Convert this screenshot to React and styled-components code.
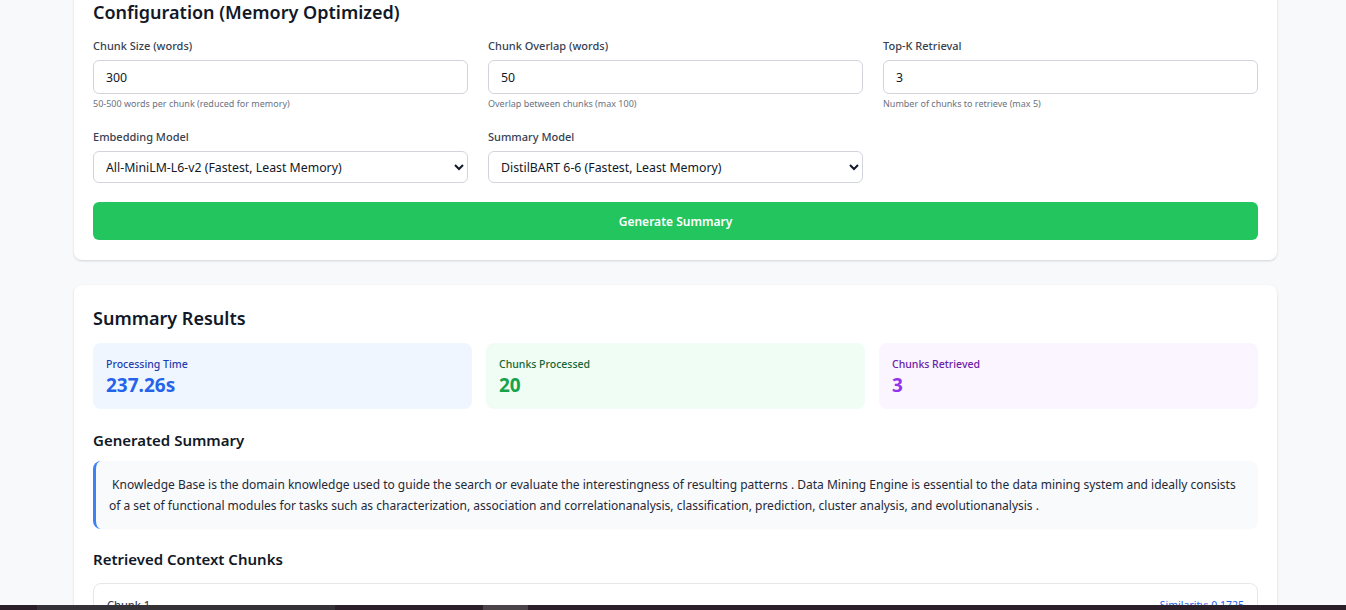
import styled, { createGlobalStyle } from 'styled-components';

const Global = createGlobalStyle`
  html, body {
    margin: 0;
    padding: 0;
    background: #f8f9fb;
    overflow: hidden;
  }
  body {
    font-family: "Noto Sans", "Open Sans", sans-serif;
    color: #111827;
  }
  * { box-sizing: border-box; }
`;

const fields = [
  { label: 'Chunk Size (words)', value: '300', help: '50-500 words per chunk (reduced for memory)' },
  { label: 'Chunk Overlap (words)', value: '50', help: 'Overlap between chunks (max 100)' },
  { label: 'Top-K Retrieval', value: '3', help: 'Number of chunks to retrieve (max 5)' },
];

const stats = [
  { label: 'Processing Time', value: '237.26s', tone: 'blue' },
  { label: 'Chunks Processed', value: '20', tone: 'green' },
  { label: 'Chunks Retrieved', value: '3', tone: 'purple' },
];

const tones = {
  blue: { bg: '#eff6ff', label: '#1e40af', value: '#2563eb' },
  green: { bg: '#f0fdf4', label: '#166534', value: '#16a34a' },
  purple: { bg: '#faf5ff', label: '#6b21a8', value: '#9333ea' },
};

function App() {
  return (
    <Page>
      <Global />
      <Card>
        <Title>Configuration (Memory Optimized)</Title>
        <Grid>
          {fields.map((f) => (
            <Field key={f.label}>
              <Label>{f.label}</Label>
              <Input defaultValue={f.value} />
              <Help>{f.help}</Help>
            </Field>
          ))}
          <Field>
            <Label>Embedding Model</Label>
            <Select defaultValue="a">
              <option value="a">All-MiniLM-L6-v2 (Fastest, Least Memory)</option>
            </Select>
          </Field>
          <Field>
            <Label>Summary Model</Label>
            <Select defaultValue="b">
              <option value="b">DistilBART 6-6 (Fastest, Least Memory)</option>
            </Select>
          </Field>
        </Grid>
        <GenerateButton>Generate Summary</GenerateButton>
      </Card>

      <Card>
        <ResultsTitle>Summary Results</ResultsTitle>
        <Stats>
          {stats.map((s) => (
            <Stat key={s.label} $tone={s.tone}>
              <StatLabel $tone={s.tone}>{s.label}</StatLabel>
              <StatValue $tone={s.tone}>{s.value}</StatValue>
            </Stat>
          ))}
        </Stats>
        <SubTitle>Generated Summary</SubTitle>
        <SummaryBox>
          &nbsp;Knowledge Base is the domain knowledge used to guide the search or evaluate the interestingness of resulting patterns . Data Mining Engine is essential to the data mining system and ideally consists of a set of functional modules for tasks such as characterization, association and correlationanalysis, classification, prediction, cluster analysis, and evolutionanalysis .
        </SummaryBox>
        <SubTitle $top="19px" $bottom="13px">Retrieved Context Chunks</SubTitle>
        <ChunkCard>
          <ChunkHead>
            <ChunkName>Chunk 1</ChunkName>
            <Similarity>Similarity: 0.1725</Similarity>
          </ChunkHead>
        </ChunkCard>
      </Card>

      <Taskbar>
        <TaskSegment $w="37px" $bg="#2b2029" />
        <TaskSegment $w="298px" $bg="#343236" />
        <TaskSegment $w="148px" $bg="#2b2029" />
        <TaskSegment $w="45px" $bg="#4a4448" />
        <TaskSegment $w="auto" $bg="#2b2029" $grow />
      </Taskbar>
    </Page>
  );
}

const Page = styled.div`
  display: flex;
  flex-direction: column;
  gap: 25px;
  padding: 0 69px 0 74px;
  margin-top: -22px;
`;

const Card = styled.section`
  background: #ffffff;
  border-radius: 8px;
  box-shadow: 0 1px 3px rgba(0, 0, 0, 0.1), 0 1px 2px rgba(0, 0, 0, 0.06);
  padding: 20px 19px 20px 19px;
  display: flex;
  flex-direction: column;
`;

const Title = styled.h2`
  margin: 0 0 12px;
  font-size: 18px;
  line-height: 28px;
  font-weight: 600;
  color: #111827;
`;

const Grid = styled.div`
  display: grid;
  grid-template-columns: repeat(3, 1fr);
  column-gap: 20px;
  row-gap: 18px;
`;

const Field = styled.div`
  display: flex;
  flex-direction: column;
`;

const Label = styled.label`
  font-size: 11px;
  line-height: 16px;
  font-weight: 500;
  color: #374151;
  margin-bottom: 6px;
`;

const Input = styled.input`
  height: 34px;
  border: 1px solid #d1d5db;
  border-radius: 6px;
  padding: 0 12px;
  font-family: inherit;
  font-size: 12.3px;
  color: #111827;
  background: #fff;
  outline: none;
`;

const Help = styled.p`
  margin: 3px 0 0;
  font-size: 9px;
  line-height: 14px;
  color: #6b7280;
`;

const Select = styled.select`
  height: 32px;
  border: 1px solid #d1d5db;
  border-radius: 6px;
  padding: 0 8px;
  font-family: inherit;
  font-size: 12.3px;
  color: #111827;
  background: #fff;
  outline: none;
`;

const GenerateButton = styled.button`
  margin-top: 19px;
  height: 38px;
  border: none;
  border-radius: 6px;
  background: #22c55e;
  color: #ffffff;
  font-family: inherit;
  font-size: 12px;
  font-weight: 600;
  cursor: pointer;
`;

const ResultsTitle = styled.h2`
  margin: 0 0 12px;
  font-size: 18px;
  line-height: 26px;
  font-weight: 600;
  color: #111827;
`;

const Stats = styled.div`
  display: grid;
  grid-template-columns: repeat(3, 1fr);
  gap: 14px;
`;

const Stat = styled.div`
  height: 66px;
  border-radius: 8px;
  background: ${(p) => tones[p.$tone].bg};
  padding: 13px 13px;
  display: flex;
  flex-direction: column;
`;

const StatLabel = styled.span`
  font-size: 10.5px;
  line-height: 16px;
  font-weight: 500;
  color: ${(p) => tones[p.$tone].label};
`;

const StatValue = styled.span`
  margin-top: 1px;
  font-size: 19px;
  line-height: 24px;
  font-weight: 700;
  color: ${(p) => tones[p.$tone].value};
`;

const SubTitle = styled.h3`
  margin: ${(p) => p.$top || '20px'} 0 ${(p) => p.$bottom || '10px'};
  font-size: 15px;
  line-height: 22px;
  font-weight: 600;
  color: #111827;
`;

const SummaryBox = styled.div`
  background: #f8fafc;
  border-left: 3px solid #3b82f6;
  border-radius: 8px;
  padding: 13px 13px;
  font-size: 12px;
  line-height: 21px;
  color: #1f2937;
`;

const ChunkCard = styled.div`
  border: 1px solid #e5e7eb;
  border-radius: 8px;
  padding: 13px 13px;
  height: 80px;
`;

const ChunkHead = styled.div`
  display: flex;
  justify-content: space-between;
  align-items: center;
`;

const ChunkName = styled.span`
  font-size: 11px;
  font-weight: 500;
  color: #374151;
`;

const Similarity = styled.span`
  font-size: 10.5px;
  color: #2563eb;
`;

const Taskbar = styled.div`
  position: fixed;
  left: 0;
  right: 0;
  bottom: 0;
  height: 5px;
  display: flex;
`;

const TaskSegment = styled.div`
  width: ${(p) => p.$w};
  flex: ${(p) => (p.$grow ? 1 : 'none')};
  background: ${(p) => p.$bg};
`;

export default App;
